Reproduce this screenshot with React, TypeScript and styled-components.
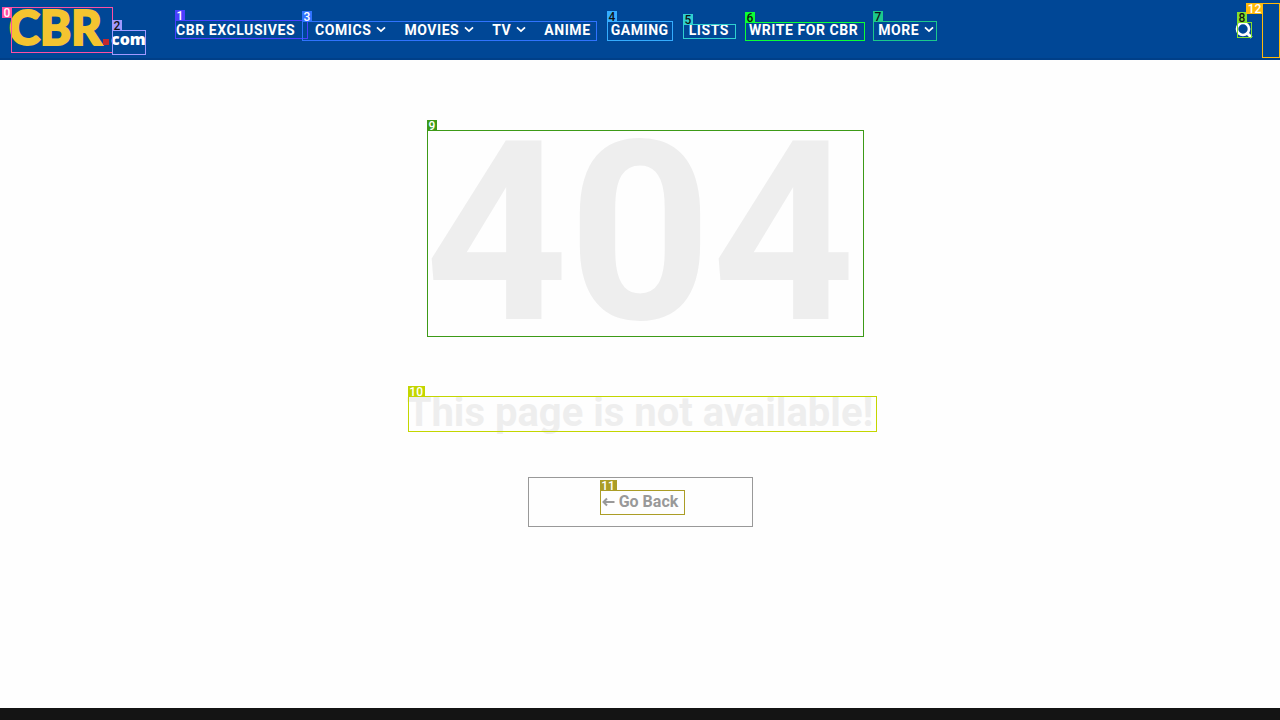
import React from "react";
import styled, { createGlobalStyle } from "styled-components";

const GlobalStyle = createGlobalStyle`
  *, *::before, *::after { box-sizing: border-box; }
  body {
    margin: 0;
    background: #fefefe;
    font-family: Roboto, "Liberation Sans", sans-serif;
  }
`;

const Page = styled.div`
  display: flex;
  flex-direction: column;
  min-height: 100vh;
`;

const Header = styled.header`
  position: relative;
  display: flex;
  align-items: center;
  height: 60px;
  padding: 0 27px 0 9px;
  background: #004796;
  box-shadow: inset 0 -2px 0 #003f88;
`;

const Logo = styled.a`
  display: flex;
  align-items: baseline;
  flex: none;
  width: 167px;
  padding-top: 6px;
  font-family: Lato, sans-serif;
  line-height: 60px;
  text-decoration: none;
`;

const LogoName = styled.span`
  flex: none;
  width: 94px;
  color: #f4c430;
  font-size: 47px;
  font-weight: 900;
  -webkit-text-stroke: 2px #f4c430;
`;

const LogoDot = styled.span`
  flex: none;
  width: 6px;
  height: 6px;
  margin-right: 2px;
  background: #c4282d;
`;

const LogoSuffix = styled.span`
  color: #fff;
  font-family: "Open Sans", sans-serif;
  font-size: 16px;
  font-weight: 800;
`;

const Nav = styled.nav`
  flex: 1;
`;

const NavList = styled.ul`
  display: flex;
  gap: 20px;
  margin: 0;
  padding: 0;
  list-style: none;
`;

const NavLink = styled.a`
  display: flex;
  align-items: center;
  gap: 5px;
  color: #fff;
  font-size: 14px;
  font-weight: 700;
  line-height: 20px;
  letter-spacing: 0.04em;
  white-space: nowrap;
  text-decoration: none;
`;

const SearchButton = styled.button`
  display: flex;
  padding: 0;
  border: 0;
  background: none;
  color: #fff;
  cursor: pointer;
`;

const Main = styled.main`
  display: flex;
  flex: 1;
  flex-direction: column;
  align-items: center;
  padding-top: 24px;
`;

const Code = styled.h1`
  position: relative;
  margin: 0;
  color: #eee;
  font-size: 250px;
  font-weight: 700;
  line-height: 300px;
`;

const Message = styled.h2`
  position: relative;
  margin: 5px 0 0;
  color: #eee;
  font-size: 40px;
  font-weight: 700;
  line-height: 48px;
`;

const BackButton = styled.button`
  position: relative;
  width: 225px;
  height: 50px;
  margin-top: 40px;
  padding: 0;
  border: 1px solid #999;
  background: #fefefe;
  color: #999;
  font-family: inherit;
  font-size: 16px;
  font-weight: 700;
  line-height: 24px;
  cursor: pointer;
`;

const BackLabel = styled.span`
  display: flex;
  align-items: center;
  justify-content: center;
  gap: 4px;
`;

const Footer = styled.footer`
  height: 12px;
  background: #141414;
`;

type MarkBox = {
  id: number;
  x: number;
  y: number;
  w: number;
  h: number;
  color: string;
  dark?: boolean;
  side?: boolean;
  fromRight?: boolean;
};

const Outline = styled.span<{ $m: MarkBox }>`
  position: absolute;
  top: ${({ $m }) => $m.y}px;
  ${({ $m }) => ($m.fromRight ? "right" : "left")}: ${({ $m }) => $m.x}px;
  width: ${({ $m }) => $m.w}px;
  height: ${({ $m }) => $m.h}px;
  border: 1px solid ${({ $m }) => $m.color};
  pointer-events: none;
`;

const Tag = styled.span<{ $m: MarkBox }>`
  position: absolute;
  ${({ $m }) => ($m.side ? "top: -1px; right: 100%;" : "bottom: 100%; left: -1px;")}
  width: ${({ $m }) => ($m.id > 9 ? 17 : 10)}px;
  height: 11px;
  background: ${({ $m }) => $m.color};
  color: ${({ $m }) => ($m.dark ? "#111" : "#fff")};
  font-size: 12px;
  font-weight: 500;
  line-height: 12px;
  letter-spacing: 0;
  text-align: center;
`;

const Mark = (props: MarkBox) => (
  <Outline $m={props} aria-hidden="true">
    <Tag $m={props}>{props.id}</Tag>
  </Outline>
);

const headerMarks: MarkBox[] = [
  { id: 0, x: 11, y: 7, w: 102, h: 46, color: "#ff4fa3", side: true },
  { id: 1, x: 175, y: 20, w: 133, h: 19, color: "#4a3fff" },
  { id: 2, x: 112, y: 30, w: 34, h: 25, color: "#a09aff", dark: true },
  { id: 3, x: 302, y: 21, w: 295, h: 20, color: "#2f73ff" },
  { id: 4, x: 607, y: 21, w: 66, h: 20, color: "#35adff", dark: true },
  { id: 5, x: 683, y: 24, w: 53, h: 15, color: "#2fd0cf", dark: true },
  { id: 6, x: 745, y: 22, w: 120, h: 19, color: "#0cff34", dark: true },
  { id: 7, x: 873, y: 21, w: 64, h: 20, color: "#1cc98c", dark: true },
  { id: 8, x: 28, y: 22, w: 15, h: 16, color: "#84e02c", dark: true, fromRight: true },
  { id: 12, x: 0, y: 3, w: 18, h: 55, color: "#ffb90a", side: true, fromRight: true },
];

const links = [
  { text: "CBR EXCLUSIVES" },
  { text: "COMICS", menu: true },
  { text: "MOVIES", menu: true },
  { text: "TV", menu: true },
  { text: "ANIME" },
  { text: "GAMING" },
  { text: "LISTS" },
  { text: "WRITE FOR CBR" },
  { text: "MORE", menu: true },
];

const Chevron = () => (
  <svg width="8" height="10" viewBox="0 0 8 10" overflow="visible" fill="none" stroke="currentColor" strokeWidth="1.8" aria-hidden="true">
    <path d="M1 2.3 5 6.1 9 2.3" />
  </svg>
);

const SearchIcon = () => (
  <svg width="18" height="18" viewBox="0 0 18 18" fill="none" stroke="currentColor" aria-hidden="true">
    <circle cx="8" cy="8" r="6" strokeWidth="2.6" />
    <path d="m11.5 11.5 5 5" strokeWidth="3" />
  </svg>
);

const ArrowLeft = () => (
  <svg width="13" height="12" viewBox="0 0 13 12" fill="none" stroke="currentColor" strokeWidth="2" aria-hidden="true">
    <path d="M12.5 6H2M5 2.5 1.5 6 5 9.5" />
  </svg>
);

export default function App() {
  return (
    <Page>
      <GlobalStyle />
      <Header>
        <Logo href="#" aria-label="CBR.com">
          <LogoName>CBR</LogoName>
          <LogoDot />
          <LogoSuffix>com</LogoSuffix>
        </Logo>
        <Nav>
          <NavList>
            {links.map((link) => (
              <li key={link.text}>
                <NavLink href="#">
                  {link.text}
                  {link.menu && <Chevron />}
                </NavLink>
              </li>
            ))}
          </NavList>
        </Nav>
        <SearchButton aria-label="Search">
          <SearchIcon />
        </SearchButton>
        {headerMarks.map((mark) => (
          <Mark key={mark.id} {...mark} />
        ))}
      </Header>
      <Main>
        <Code>
          404
          <Mark id={9} x={2} y={46} w={437} h={207} color="#3d9a17" />
        </Code>
        <Message>
          This page is not available!
          <Mark id={10} x={1} y={7} w={469} h={36} color="#c3d600" />
        </Message>
        <BackButton>
          <BackLabel>
            <ArrowLeft />
            Go Back
          </BackLabel>
          <Mark id={11} x={71} y={12} w={85} h={25} color="#ab9d26" />
        </BackButton>
      </Main>
      <Footer />
    </Page>
  );
}
